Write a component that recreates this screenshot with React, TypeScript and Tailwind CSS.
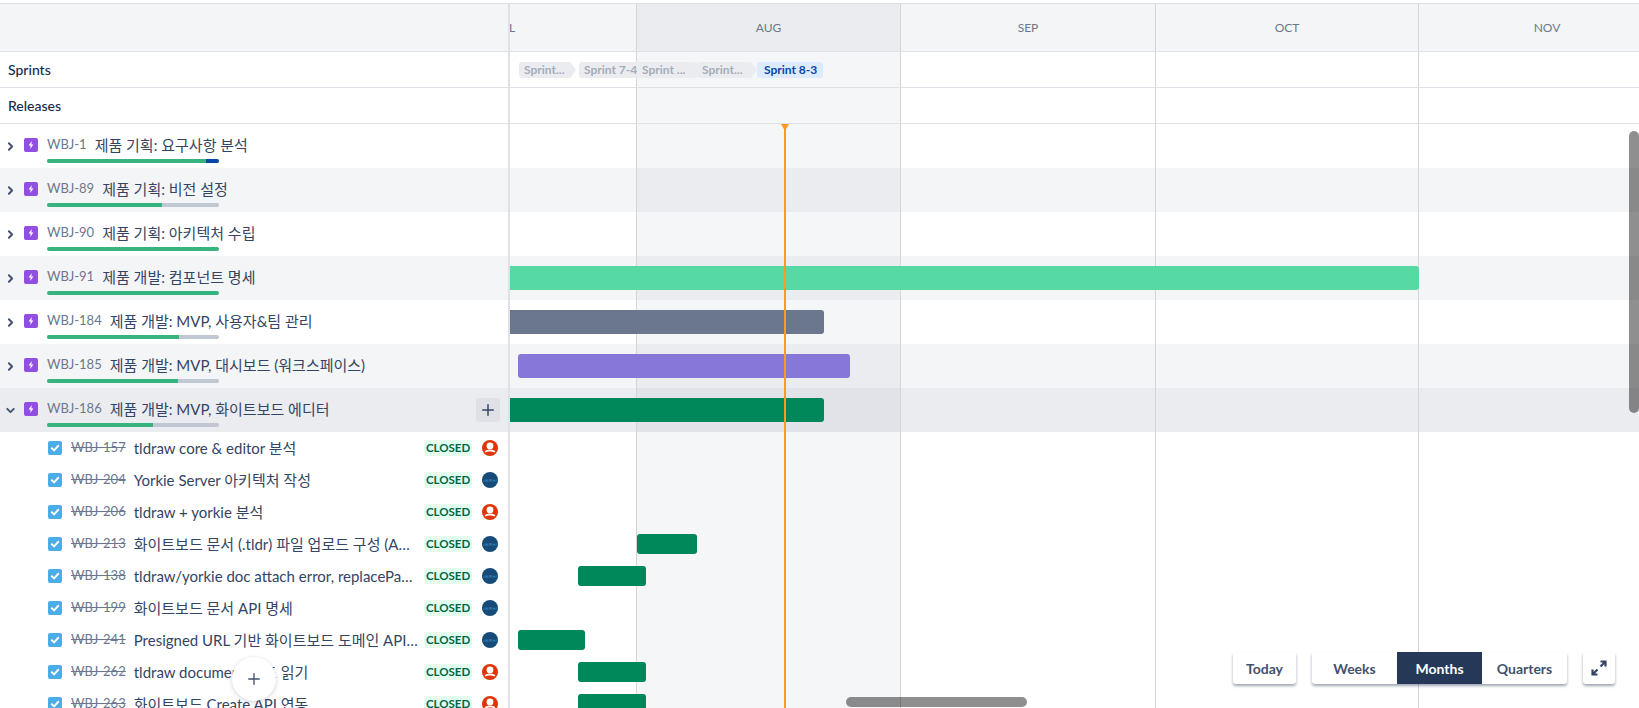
import React from "react";
import { ChevronRight, ChevronDown, Plus } from "lucide-react";

const green = "bg-[#36b37e]";

function MonthCells({ tint = "bg-[#091e420a]", children }: { tint?: string; children?: React.ReactNode }) {
  return (
    <div className="relative flex-1 flex h-full overflow-hidden">
      <div className="w-[127px] shrink-0 border-r border-[#d3d5da]" />
      <div className={`w-[264px] shrink-0 border-r border-[#d3d5da] ${tint}`} />
      <div className="w-[255px] shrink-0 border-r border-[#d3d5da]" />
      <div className="w-[263px] shrink-0 border-r border-[#d3d5da]" />
      <div className="flex-1" />
      {children}
    </div>
  );
}

function Bar({ left, width, color, h = 24, top = 10 }: { left: number; width: number; color: string; h?: number; top?: number }) {
  const radius = left === 0 ? "rounded-r-[3px]" : "rounded-[3px]";
  return <div className={`absolute ${color} ${radius}`} style={{ left, width, height: h, top }} />;
}

function Bolt() {
  return (
    <span className="w-[14px] h-[14px] shrink-0 rounded-[2px] bg-[#904ee2] flex items-center justify-center">
      <svg width="10" height="10" viewBox="0 0 10 10"><path d="M5.8 1 2.6 5.6h2.1L4.2 9l3.2-4.6H5.3z" fill="#fff" /></svg>
    </span>
  );
}

function TaskIcon() {
  return (
    <span className="w-[14px] h-[14px] shrink-0 rounded-[2px] bg-[#4bade8] flex items-center justify-center">
      <svg width="14" height="14" viewBox="0 0 14 14"><path d="M3.8 7.2 6.1 9.4 10.2 4.8" fill="none" stroke="#fff" strokeWidth="2" strokeLinecap="round" strokeLinejoin="round" /></svg>
    </span>
  );
}

function RedAvatar() {
  return (
    <svg width="16" height="16" viewBox="0 0 16 16" className="shrink-0">
      <circle cx="8" cy="8" r="8" fill="#de350b" />
      <circle cx="8" cy="6" r="3.4" fill="#fff" />
      <path d="M2.6 11.4c1.4-1.2 3.2-1.6 5.4-1.6s4 .4 5.4 1.6L12.4 12.6c-1.2-.8-2.7-1.1-4.4-1.1s-3.2.3-4.4 1.1z" fill="#fff" />
    </svg>
  );
}

function BlueAvatar() {
  return (
    <svg width="16" height="16" viewBox="0 0 16 16" className="shrink-0">
      <circle cx="8" cy="8" r="8" fill="#164a78" />
      <path d="M0 7.5h16v2.5H0z" fill="#1f5f94" opacity=".8" />
      <circle cx="4.5" cy="8.5" r="1" fill="#3b7cb0" />
      <circle cx="8.5" cy="8" r="1" fill="#3b7cb0" />
      <circle cx="12" cy="8.5" r=".8" fill="#3b7cb0" />
    </svg>
  );
}

const epics = [
  { key: "WBJ-1", title: "제품 기획: 요구사항 분석", done: 159, blue: 13, bg: "bg-white" },
  { key: "WBJ-89", title: "제품 기획: 비전 설정", done: 115, bg: "bg-[#f4f5f7]" },
  { key: "WBJ-90", title: "제품 기획: 아키텍처 수립", done: 172, bg: "bg-white" },
  { key: "WBJ-91", title: "제품 개발: 컴포넌트 명세", done: 172, bg: "bg-[#f4f5f7]", bar: { left: 0, width: 909, color: "bg-[#57d9a3]" } },
  { key: "WBJ-184", title: "제품 개발: MVP, 사용자&팀 관리", done: 132, bg: "bg-white", bar: { left: 0, width: 314, color: "bg-[#6b778c]" } },
  { key: "WBJ-185", title: "제품 개발: MVP, 대시보드 (워크스페이스)", done: 131, bg: "bg-[#f4f5f7]", bar: { left: 8, width: 332, color: "bg-[#8777d9]" } },
  { key: "WBJ-186", title: "제품 개발: MVP, 화이트보드 에디터", done: 106, bg: "bg-[#ebecf0]", open: true, bar: { left: 0, width: 314, color: "bg-[#00875a]" } },
];

const tasks = [
  { key: "WBJ-157", title: "tldraw core & editor 분석", red: true },
  { key: "WBJ-204", title: "Yorkie Server 아키텍처 작성" },
  { key: "WBJ-206", title: "tldraw + yorkie 분석", red: true },
  { key: "WBJ-213", title: "화이트보드 문서 (.tldr) 파일 업로드 구성 (API 연동)", bar: { left: 127, width: 60 } },
  { key: "WBJ-138", title: "tldraw/yorkie doc attach error, replacePageContent 수정", bar: { left: 68, width: 68 } },
  { key: "WBJ-199", title: "화이트보드 문서 API 명세" },
  { key: "WBJ-241", title: "Presigned URL 기반 화이트보드 도메인 API 구현하기", bar: { left: 8, width: 67 } },
  { key: "WBJ-262", title: "tldraw document 코드 읽기", red: true, bar: { left: 68, width: 68 } },
  { key: "WBJ-263", title: "화이트보드 Create API 연동", red: true, bar: { left: 68, width: 68 } },
];

function Sprint({ label, left, width, active, arrow }: { label: string; left: number; width: number; active?: boolean; arrow?: boolean }) {
  return (
    <div
      className={`absolute top-[10px] h-[16px] flex items-center rounded-[3px] text-[12px] font-bold leading-none whitespace-nowrap overflow-hidden ${active ? "bg-[#deebff] text-[#0747a6] pl-[7px]" : "bg-[#ebecf0] text-[#a5adba] pl-[5px]"} ${arrow ? "[clip-path:polygon(0_0,90%_0,100%_50%,90%_100%,0_100%)]" : ""}`}
      style={{ left, width }}
    >
      {label}
    </div>
  );
}

export default function App() {
  return (
    <div className="relative w-full h-[708px] overflow-hidden bg-white text-[14px] text-[#344563] font-['Lato','Noto_Sans_CJK_KR',sans-serif]">
      <div className="h-[3px]" />
      <div className="flex h-[49px] bg-[#f4f5f7] border-y border-[#dfe1e6]">
        <div className="w-[510px] shrink-0 border-r-2 border-[#dfe1e6]" />
        <div className="relative flex-1 flex h-full overflow-hidden text-[12px] text-[#6b778c]">
          <div className="w-[127px] shrink-0 border-r border-[#d3d5da] flex items-center"><span className="-ml-[15px]">JUL</span></div>
          <div className="w-[264px] shrink-0 border-r border-[#d3d5da] bg-[#ebecf0] flex items-center justify-center">AUG</div>
          <div className="w-[255px] shrink-0 border-r border-[#d3d5da] flex items-center justify-center">SEP</div>
          <div className="w-[263px] shrink-0 border-r border-[#d3d5da] flex items-center justify-center">OCT</div>
          <div className="w-[256px] shrink-0 flex items-center justify-center">NOV</div>
        </div>
      </div>

      <div className="flex h-[36px] border-b border-[#dfe1e6]">
        <div className="w-[510px] shrink-0 border-r-2 border-[#dfe1e6] pl-2 flex items-center font-medium text-[14px] text-[#172b4d]">Sprints</div>
        <MonthCells>
          <Sprint label="Sprint..." left={9} width={57} arrow />
          <Sprint label="Sprint 7-4" left={69} width={64} />
          <Sprint label="Sprint ..." left={127} width={60} />
          <Sprint label="Sprint..." left={187} width={60} arrow />
          <Sprint label="Sprint 8-3" left={247} width={66} active />
        </MonthCells>
      </div>

      <div className="flex h-[36px] border-b border-[#dfe1e6]">
        <div className="w-[510px] shrink-0 border-r-2 border-[#dfe1e6] pl-2 flex items-center font-medium text-[14px] text-[#172b4d]">Releases</div>
        <MonthCells />
      </div>

      {epics.map((e) => (
        <div key={e.key} className={`flex h-[44px] ${e.bg}`}>
          <div className="relative w-[510px] shrink-0 border-r-2 border-[#dfe1e6] flex">
            <div className="w-[24px] shrink-0 flex justify-center pt-[16px] pr-[3px]">
              {e.open ? (
                <ChevronDown size={13} strokeWidth={3.5} className="text-[#42526e]" />
              ) : (
                <ChevronRight size={13} strokeWidth={3.5} className="text-[#42526e]" />
              )}
            </div>
            <div className="flex-1 min-w-0 pt-[10px]">
              <div className="flex items-center h-[22px] gap-[9px]">
                <Bolt />
                <span className="text-[13px] text-[#6b778c] -mr-[1px]">{e.key}</span>
                <span className="whitespace-nowrap text-[15px]">{e.title}</span>
              </div>
              <div className="ml-[23px] mt-[3px] w-[172px] h-[4px] rounded-full bg-[#c1c7d0] overflow-hidden flex">
                <div className={green} style={{ width: e.done }} />
                {e.blue ? <div className="bg-[#0747a6]" style={{ width: e.blue }} /> : null}
              </div>
            </div>
            {e.open ? (
              <div className="absolute left-[476px] top-[10px] w-[24px] h-[24px] rounded-[3px] bg-[#dfe1e6] flex items-center justify-center">
                <Plus size={18} strokeWidth={2} className="text-[#344563]" />
              </div>
            ) : null}
          </div>
          <MonthCells>{e.bar ? <Bar {...e.bar} /> : null}</MonthCells>
        </div>
      ))}

      {tasks.map((t) => (
        <div key={t.key} className="flex h-[32px] bg-white">
          <div className="w-[510px] shrink-0 border-r-2 border-[#dfe1e6] pl-[48px] pr-[10px] flex items-center">
            <TaskIcon />
            <span className="ml-[9px] line-through text-[#6b778c] text-[13px] shrink-0">{t.key}</span>
            <span className="ml-2 flex-1 min-w-0 truncate text-[15px]">{t.title}</span>
            <span className="ml-[6px] w-[48px] h-[16px] shrink-0 rounded-[3px] bg-[#e3fcef] text-[#006644] text-[11.5px] font-bold flex items-center justify-center">CLOSED</span>
            <span className="ml-[10px] shrink-0 flex">{t.red ? <RedAvatar /> : <BlueAvatar />}</span>
          </div>
          <MonthCells tint="bg-[#091e420a]">
            {t.bar ? <Bar left={t.bar.left} width={t.bar.width} color="bg-[#00875a]" h={20} top={6} /> : null}
          </MonthCells>
        </div>
      ))}

      {/* today marker */}
      <div className="absolute left-[784px] top-[124px] bottom-0 w-[2px] bg-[#ff991f]" />
      <svg className="absolute left-[781px] top-[124px]" width="8" height="7" viewBox="0 0 8 7"><path d="M0 0h8L4 7z" fill="#ff991f" /></svg>

      {/* floating add button */}
      <div className="absolute left-[232px] top-[657px] w-[44px] h-[44px] rounded-full bg-white shadow-[0_1px_4px_rgba(9,30,66,0.2)] flex items-center justify-center">
        <Plus size={18} strokeWidth={1.8} className="text-[#42526e]" />
      </div>

      {/* timeline controls */}
      <div className="absolute left-[1233px] top-[652px] flex items-start gap-4 text-[14px] font-bold text-[#42526e]">
        <div className="w-[63px] h-[32px] rounded-[3px] bg-white shadow-[0_2px_3px_rgba(9,30,66,0.4)] flex items-center justify-center">Today</div>
        <div className="flex h-[32px] rounded-[3px] bg-white shadow-[0_2px_3px_rgba(9,30,66,0.4)]">
          <div className="w-[85px] flex items-center justify-center">Weeks</div>
          <div className="w-[85px] flex items-center justify-center bg-[#253858] text-white">Months</div>
          <div className="w-[85px] flex items-center justify-center">Quarters</div>
        </div>
        <div className="w-[32px] h-[32px] rounded-[3px] bg-white shadow-[0_2px_3px_rgba(9,30,66,0.4)] flex items-center justify-center">
          <svg width="18" height="18" viewBox="0 0 18 18" fill="none" stroke="#344563" strokeWidth="2.2">
            <path d="M10.5 7.5 15 3M10.5 2.5h5v5M7.5 10.5 3 15M2.5 10.5v5h5" />
          </svg>
        </div>
      </div>

      {/* scrollbars */}
      <div className="absolute left-[1629px] top-[131px] w-[10px] h-[282px] rounded-full bg-[#00000070]" />
      <div className="absolute left-[846px] top-[697px] w-[181px] h-[10px] rounded-full bg-[#00000070]" />
    </div>
  );
}
